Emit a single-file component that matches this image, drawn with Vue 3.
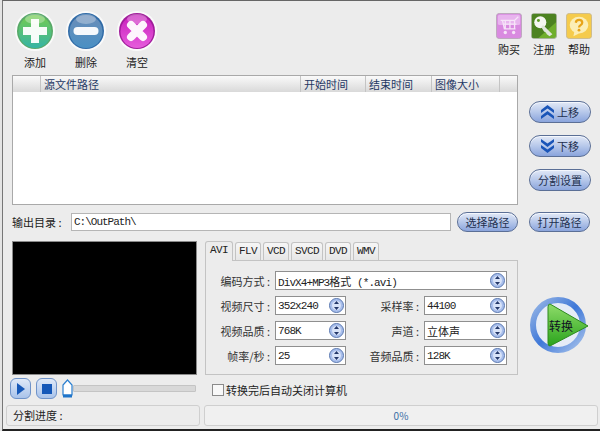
<template>
  <div class="window">
    <div class="toolbar">
      <div class="tool-left">
        <div class="tool" v-for="t in leftTools" :key="t.label">
          <svg width="40" height="40" viewBox="0 0 40 40">
            <defs>
              <linearGradient :id="'ball-' + t.icon" x1="0" y1="0" x2="0" y2="1">
                <stop offset="0" :stop-color="t.top" />
                <stop offset="1" :stop-color="t.bottom" />
              </linearGradient>
            </defs>
            <circle cx="20" cy="20" r="20" fill="#fafafa" />
            <circle cx="20" cy="20" r="18" :fill="t.edge" />
            <circle cx="20" cy="20.500" r="16.500" :fill="'url(#ball-' + t.icon + ')'" />
            <ellipse cx="20" cy="8" rx="10" ry="5" fill="#fff" opacity="0.3" />
            <path v-if="t.icon === 'plus'" d="M16 8h8v8h8v8h-8v8h-8v-8H8v-8h8z" fill="#fff" opacity="0.95" />
            <rect v-if="t.icon === 'minus'" x="7.500" y="16" width="25" height="8" rx="4" fill="#fff" opacity="0.95" />
            <path v-if="t.icon === 'x'" d="M14 14l12 12M26 14L14 26" fill="none" stroke="#fff" stroke-width="8" stroke-linecap="round" opacity="0.95" />
          </svg>
          <span>{{ t.label }}</span>
        </div>
      </div>
      <div class="tool-right">
        <div class="tool small">
          <svg width="26" height="26" viewBox="0 0 28 28">
            <rect x="0.500" y="0.500" width="27" height="27" rx="3" fill="#d98ae0" stroke="#b9a5ba" />
            <rect x="2" y="2" width="24" height="11" rx="2" fill="#e8b4ee" />
            <path d="M5 8h15l4-4M7 8l2 9h12M8 12h14M10 8v9M15 8v9M20 8v9" fill="none" stroke="#f6e4f8" stroke-width="1.400" />
            <circle cx="10" cy="21" r="1.800" fill="#f6e4f8" />
            <circle cx="19" cy="21" r="1.800" fill="#f6e4f8" />
          </svg>
          <span>购买</span>
        </div>
        <div class="tool small">
          <svg width="26" height="26" viewBox="0 0 28 28">
            <rect x="0.500" y="0.500" width="27" height="27" rx="3" fill="#6fae2c" stroke="#a7b29e" />
            <path d="M1 1h26v9L8 27H1z" fill="#2f5f18" opacity="0.55" />
            <circle cx="10" cy="10" r="6.500" fill="#f4f6f0" />
            <path d="M13 13l10 10-3 2-3-2-1-2-2-1-3-5z" fill="#dfe5da" />
            <circle cx="8" cy="8" r="1.600" fill="#5c9a24" />
          </svg>
          <span>注册</span>
        </div>
        <div class="tool small">
          <svg width="26" height="26" viewBox="0 0 28 28">
            <rect x="0.500" y="0.500" width="27" height="27" rx="3" fill="#f5cb4c" stroke="#c9b98c" />
            <ellipse cx="14" cy="13" rx="10" ry="9" fill="#fbeeb6" />
            <path d="M9 20l-1 5 6-3z" fill="#fbeeb6" />
            <path d="M10.500 10.500c.5-4 7-4 7 0 0 2.500-3.500 2.500-3.500 5" fill="none" stroke="#e8a418" stroke-width="2.400" />
            <circle cx="14" cy="18.500" r="1.500" fill="#e8a418" />
          </svg>
          <span>帮助</span>
        </div>
      </div>
    </div>

    <div class="list-row">
      <div class="list">
        <div class="list-head">
          <div class="col col-blank"></div>
          <div class="col col-path">源文件路径</div>
          <div class="col col-start">开始时间</div>
          <div class="col col-end-time">结束时间</div>
          <div class="col col-size">图像大小</div>
          <div class="col col-end"></div>
        </div>
      </div>
      <div class="side-buttons">
        <button class="pill">
          <svg width="13" height="14" viewBox="0 0 13 14"><path d="M6.500 0L13 5v3L6.500 3.500 0 8V5zM6.500 6L13 11v3L6.500 9.500 0 14v-3z" fill="#1a55b8" /></svg>
          上移
        </button>
        <button class="pill">
          <svg width="13" height="14" viewBox="0 0 13 14"><path d="M6.500 14L13 9V6l-6.500 4.500L0 6v3zM6.500 8L13 3V0L6.500 4.500 0 0v3z" fill="#1a55b8" /></svg>
          下移
        </button>
        <button class="pill">分割设置</button>
      </div>
    </div>

    <div class="path-row">
      <label class="path-label">输出目录 :</label>
      <div class="path-input">C:\OutPath\</div>
      <button class="pill short">选择路径</button>
      <button class="pill short open">打开路径</button>
    </div>

    <div class="work">
      <div class="player">
        <div class="video"></div>
        <div class="controls">
          <div class="ctl"><svg width="8" height="12" viewBox="0 0 8 12"><path d="M0 0l8 6-8 6z" fill="#1558b8" /></svg></div>
          <div class="ctl"><span class="stop"></span></div>
          <svg class="thumb" width="11" height="19" viewBox="0 0 11 19">
            <path d="M5.500 1l4.500 5v10H1V6z" fill="#fff" stroke="#2a7fd0" stroke-width="1.200" />
            <rect x="1" y="15.500" width="9" height="3" fill="#1f74c9" />
          </svg>
          <div class="track"></div>
        </div>
      </div>

      <div class="settings">
        <div class="tabs">
          <div v-for="(t, i) in tabs" :key="t" class="tab" :class="{ active: i === 0 }">{{ t }}</div>
        </div>
        <div class="panel">
          <div class="form">
            <label>编码方式 :</label>
            <div class="select wide">
              <span>DivX4+MP3<b>格式</b> (*.avi)</span>
              <svg class="spin" width="15" height="15" viewBox="0 0 15 15">
                <circle cx="7.500" cy="7.500" r="7" fill="#a9bfec" stroke="#5a78b0" />
                <circle cx="7.500" cy="7.500" r="4.500" fill="#d8e3f8" />
                <path d="M7.500 3l2.500 3H5zM7.500 12L5 9h5z" fill="#24386a" />
              </svg>
            </div>
            <template v-for="r in rows" :key="r.a">
              <label>{{ r.a }} :</label>
              <div class="select">
                <span>{{ r.av }}</span>
                <svg class="spin" width="15" height="15" viewBox="0 0 15 15">
                  <circle cx="7.500" cy="7.500" r="7" fill="#a9bfec" stroke="#5a78b0" />
                  <circle cx="7.500" cy="7.500" r="4.500" fill="#d8e3f8" />
                  <path d="M7.500 3l2.500 3H5zM7.500 12L5 9h5z" fill="#24386a" />
                </svg>
              </div>
              <label>{{ r.b }} :</label>
              <div class="select">
                <span :class="{ cjk: r.cjk }">{{ r.bv }}</span>
                <svg class="spin" width="15" height="15" viewBox="0 0 15 15">
                  <circle cx="7.500" cy="7.500" r="7" fill="#a9bfec" stroke="#5a78b0" />
                  <circle cx="7.500" cy="7.500" r="4.500" fill="#d8e3f8" />
                  <path d="M7.500 3l2.500 3H5zM7.500 12L5 9h5z" fill="#24386a" />
                </svg>
              </div>
            </template>
          </div>
        </div>
        <div class="auto-off">
          <span class="check"></span>
          <span>转换完后自动关闭计算机</span>
        </div>
      </div>

      <div class="convert">
        <svg width="62" height="62" viewBox="0 0 62 62">
          <defs>
            <linearGradient id="ring" x1="0" y1="0" x2="1" y2="1">
              <stop offset="0" stop-color="#9ab8e6" />
              <stop offset="0.5" stop-color="#3f78d8" />
              <stop offset="1" stop-color="#a9c4ec" />
            </linearGradient>
            <linearGradient id="arrow" x1="0" y1="0" x2="0" y2="1">
              <stop offset="0" stop-color="#8fdc6a" />
              <stop offset="1" stop-color="#2aa31c" />
            </linearGradient>
          </defs>
          <circle cx="30" cy="30" r="25" fill="#e6ecf6" stroke="url(#ring)" stroke-width="6" />
          <path d="M22 9l38 22-38 20q-2 0-2-3V12q0-3 2-3z" fill="url(#arrow)" stroke="#2c8a1e" />
        </svg>
        <span class="convert-text">转换</span>
      </div>
    </div>

    <div class="status">
      <div class="status-left">分割进度 :</div>
      <div class="status-right">0%</div>
    </div>
  </div>
</template>

<script setup>
const leftTools = [
  { label: '添加', icon: 'plus', edge: '#58a868', top: '#74cc4c', bottom: '#36b4a6' },
  { label: '删除', icon: 'minus', edge: '#2f6aa6', top: '#6b8db8', bottom: '#4a90c4' },
  { label: '清空', icon: 'x', edge: '#a01c9a', top: '#c81fbc', bottom: '#e65cdc' }
]

const tabs = ['AVI', 'FLV', 'VCD', 'SVCD', 'DVD', 'WMV']

const rows = [
  { a: '视频尺寸', av: '352x240', b: '采样率', bv: '44100' },
  { a: '视频品质', av: '768K', b: '声道', bv: '立体声', cjk: true },
  { a: '帧率/秒', av: '25', b: '音频品质', bv: '128K' }
]
</script>

<style>
html, body {
  margin: 0;
  background: #e4e4e4;
}
</style>

<style scoped>
.window {
  box-sizing: border-box;
  width: 598px;
  height: 431px;
  margin-left: 2px;
  display: flex;
  flex-direction: column;
  padding: 2px 2px 0 0;
  background: #ececec;
  border-top: 1px solid #666;
  border-left: 1px solid #777;
  border-bottom: 2px solid #222;
  font-family: "Noto Sans CJK SC", "Liberation Sans", sans-serif;
  font-size: 11px;
  color: #222;
  overflow: hidden;
}

.toolbar {
  height: 72px;
  display: flex;
  justify-content: space-between;
  flex-shrink: 0;
}

.tool-left {
  display: flex;
  gap: 11px;
  padding: 8px 0 0 12px;
}

.tool {
  display: flex;
  flex-direction: column;
  align-items: center;
  line-height: 14px;
  gap: 4px;
}

.tool-right {
  display: flex;
  gap: 9px;
  padding: 10px 6px 0 0;
}

.tool.small {
  gap: 3px;
}

.list-row {
  display: flex;
  height: 131px;
  flex-shrink: 0;
}

.list {
  box-sizing: border-box;
  width: 506px;
  height: 130px;
  margin-left: 9px;
  background: #fff;
  border: 1px solid #a9a9a9;
}

.list-head {
  display: flex;
  height: 16px;
  background: linear-gradient(#fafafa, #d9d9d9);
  color: #1f3864;
  line-height: 16px;
}

.col {
  box-sizing: border-box;
  border-right: 1px solid #c4c4c4;
  padding-left: 3px;
}

.col-blank {
  width: 28px;
}

.col-path {
  width: 260px;
}

.col-start {
  width: 65px;
}

.col-end-time {
  width: 66px;
}

.col-size {
  width: 68px;
}

.col-end {
  flex: 1;
  border-right: none;
}

.side-buttons {
  display: flex;
  flex-direction: column;
  gap: 12px;
  padding: 26px 0 0 11px;
}

.pill {
  box-sizing: border-box;
  width: 62px;
  height: 22px;
  padding: 0;
  display: flex;
  align-items: center;
  justify-content: center;
  gap: 3px;
  border: 1px solid #5b6f96;
  border-radius: 12px;
  background: linear-gradient(#e2e9f7 0%, #b7c8ea 50%, #8aa4dc 100%);
  box-shadow: inset 0 1px 0 #f4f7fd;
  font: inherit;
  color: #22304f;
}

.pill.short {
  width: 61px;
  height: 20px;
}

.path-row {
  display: flex;
  align-items: center;
  height: 20px;
  margin-top: 6px;
  padding-left: 9px;
  flex-shrink: 0;
}

.path-label {
  width: 59px;
}

.path-input {
  box-sizing: border-box;
  width: 380px;
  height: 18px;
  margin-right: 6px;
  padding-left: 2px;
  background: #fff;
  border: 1px solid #b5b5b5;
  font-family: "Liberation Mono", monospace;
  letter-spacing: -1px;
  line-height: 16px;
}

.path-row .open {
  margin-left: 11px;
}

.work {
  display: flex;
  margin-top: 9px;
  padding-left: 9px;
  height: 161px;
  flex-shrink: 0;
}

.player {
  width: 185px;
  margin-right: 8px;
}

.video {
  height: 134px;
  background: #000;
  border: 1px solid #8a8a8a;
  box-sizing: border-box;
}

.controls {
  display: flex;
  align-items: center;
  height: 21px;
  margin-left: -2px;
  margin-top: 3px;
}

.ctl {
  box-sizing: border-box;
  width: 21px;
  height: 21px;
  display: flex;
  align-items: center;
  justify-content: center;
  margin-right: 5px;
  border: 1px solid #6f93c9;
  border-radius: 6px;
  background: linear-gradient(#dfe9f8, #a9c3ea);
}

.stop {
  width: 10px;
  height: 10px;
  background: #1558b8;
}

.thumb {
  flex-shrink: 0;
}

.track {
  flex: 1;
  box-sizing: border-box;
  height: 7px;
  margin-right: 1px;
  background: #d8d8d8;
  border: 1px solid #c4c4c4;
  border-radius: 1px;
}

.settings {
  width: 313px;
}

.tabs {
  display: flex;
  align-items: flex-end;
  gap: 2px;
  height: 19px;
  font-family: "Liberation Mono", monospace;
  letter-spacing: -0.600px;
  position: relative;
  z-index: 1;
}

.tab {
  box-sizing: border-box;
  height: 18px;
  padding: 0 3px;
  line-height: 16px;
  background: linear-gradient(#f6f6f6, #e6e6e6);
  border: 1px solid #c3c3c3;
  border-bottom: none;
  border-radius: 3px 3px 0 0;
}

.tab.active {
  height: 20px;
  margin-bottom: -1px;
  padding: 0 4px;
  background: #ececec;
}

.panel {
  box-sizing: border-box;
  height: 115px;
  padding-top: 10px;
  border: 1px solid #c3c3c3;
}

.form {
  display: grid;
  grid-template-columns: 64px 71px 68px 83px;
  grid-auto-rows: 19px;
  gap: 6px 5px;
  align-items: center;
}

.form label {
  text-align: right;
  color: #333;
}

.select {
  box-sizing: border-box;
  height: 19px;
  display: flex;
  align-items: center;
  justify-content: space-between;
  padding: 0 1px 0 2px;
  background: #fff;
  border: 1px solid #8f8f8f;
  font-family: "Liberation Mono", "Noto Sans CJK SC", monospace;
  letter-spacing: -0.900px;
}

.select b {
  font-weight: 400;
  letter-spacing: 0;
}

.select .cjk {
  letter-spacing: 0;
}

.select.wide {
  grid-column: 2 / 5;
}

.spin {
  flex-shrink: 0;
}

.auto-off {
  display: flex;
  align-items: center;
  gap: 2px;
  height: 16px;
  margin: 7px 0 0 7px;
}

.check {
  box-sizing: border-box;
  width: 12px;
  height: 12px;
  border: 1px solid #8a8a8a;
  background: #f8f8f8;
}

.convert {
  position: relative;
  margin: 54px 0 0 10px;
  width: 62px;
  height: 62px;
}

.convert-text {
  position: absolute;
  left: 21px;
  top: 23px;
  font-size: 12px;
  line-height: 16px;
  color: #112;
}

.status {
  display: flex;
  gap: 4px;
  height: 21px;
  margin-top: 3px;
  padding-left: 3px;
  flex-shrink: 0;
}

.status-left,
.status-right {
  box-sizing: border-box;
  border: 1px solid #cfcfcf;
  border-radius: 3px;
  line-height: 19px;
}

.status-left {
  width: 194px;
  padding-left: 6px;
}

.status-right {
  flex: 1;
  text-align: center;
  color: #3a6ea5;
  background: #f0f0f0;
  font-size: 10px;
}
</style>
